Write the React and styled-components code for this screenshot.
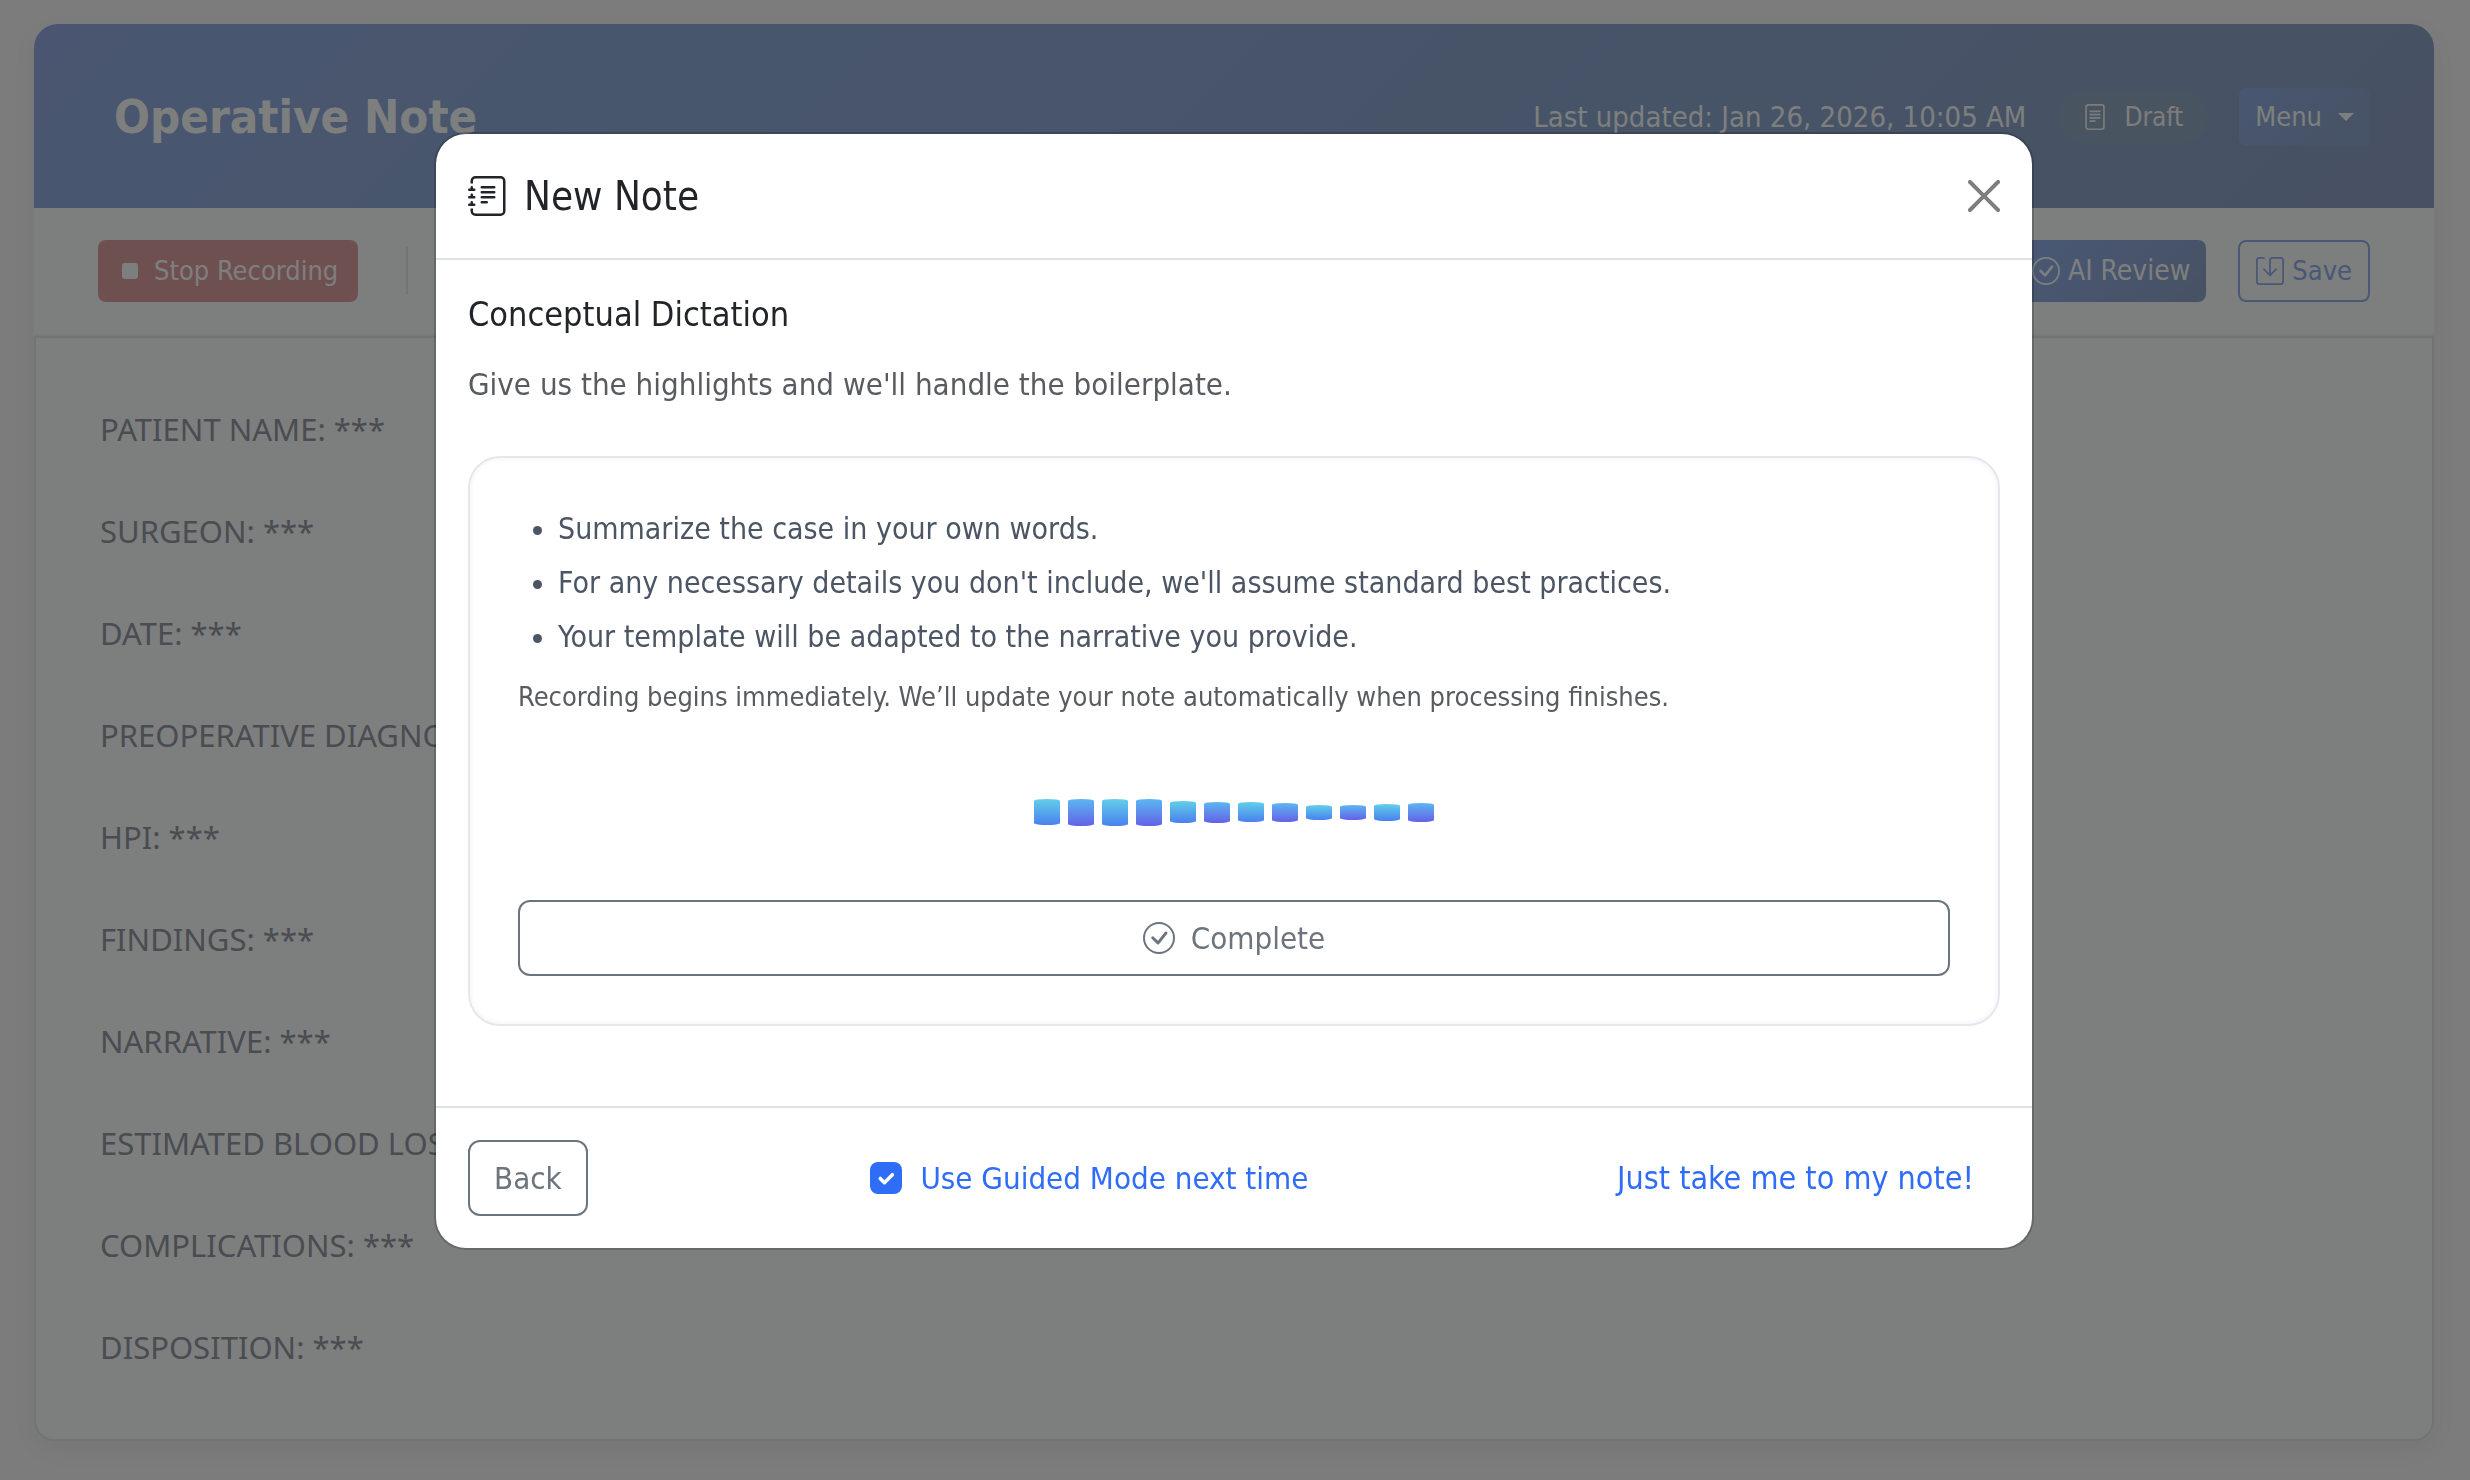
import React from 'react'
import styled, { createGlobalStyle } from 'styled-components'
import { BsCheckCircle, BsFileText, BsJournalText } from 'react-icons/bs'

const GlobalStyle = createGlobalStyle`
  *, *::before, *::after {
    box-sizing: border-box;
  }
  body {
    margin: 0;
    background: #f8f8f8;
    color: #212529;
    font-family: Tahoma, 'DejaVu Sans Condensed', 'Noto Sans', sans-serif;
    font-size: 31px;
    line-height: 48px;
  }
  button, input {
    font: inherit;
  }
  h1, h2, h3, p, ul {
    margin: 0;
    font-weight: 400;
  }
`

const Page = styled.div`
  padding: 24px 36px 40px 34px;
`

const NoteCard = styled.main`
  border-radius: 24px 24px 20px 20px;
  background: #fafefc;
  box-shadow: 0 8px 24px rgba(0, 0, 0, 0.05);
`

const NoteHeader = styled.header`
  display: flex;
  align-items: center;
  justify-content: space-between;
  min-height: 184px;
  padding: 2px 64px 0 80px;
  border-radius: 24px 24px 0 0;
  background: linear-gradient(135deg, #94ace2 0%, #90acd8 30%, #8ea2c6 100%);
  color: #fafefc;
`

const NoteTitle = styled.h1`
  font-size: 47px;
  font-weight: 700;
  line-height: 58px;
`

const HeaderMeta = styled.div`
  display: flex;
  align-items: center;
  gap: 32px;
  font-size: 29px;
`

const StatusBadge = styled.span`
  display: flex;
  align-items: center;
  gap: 16px;
  height: 54px;
  padding: 0 24px;
  border-radius: 27px;
  background: #92a8c2;
  color: #fbf8f8;
  font-size: 26px;
`

const MenuButton = styled.button`
  display: flex;
  align-items: center;
  gap: 16px;
  height: 58px;
  padding: 0 16px;
  border: none;
  border-radius: 8px;
  background: linear-gradient(135deg, #92aee4 0%, #8fa6cc 80%);
  color: #fafefc;
  font-size: 27px;

  &::after {
    content: '';
    border: 8px solid transparent;
    border-top-color: currentColor;
    border-bottom: 0;
  }
`

const Toolbar = styled.div`
  display: flex;
  align-items: center;
  justify-content: space-between;
  padding: 32px 64px;
  border-bottom: 2px solid #f1f5f3;
`

const ToolGroup = styled.div`
  display: flex;
  align-items: center;
  gap: 32px;
`

const ToolButton = styled.button`
  display: flex;
  align-items: center;
  gap: 8px;
  height: 62px;
  padding: 0 16px;
  border: 2px solid transparent;
  border-radius: 8px;
  font-size: 27px;
`

const StopButton = styled(ToolButton)`
  gap: 16px;
  padding: 0 18px 0 22px;
  background: #dea0a0;
  color: #fafefc;

  &::before {
    content: '';
    width: 16px;
    height: 16px;
    border-radius: 3px;
    background: currentColor;
  }
`

const ReviewButton = styled(ToolButton)`
  padding: 0 14px;
  background: linear-gradient(135deg, #92b0ec, #8ea4c6) border-box;
  color: #fafefc;
  font-size: 28px;
`

const SaveButton = styled(ToolButton)`
  border-color: #92b0ec;
  background: transparent;
  color: #92b0ec;
`

const Divider = styled.span`
  width: 2px;
  height: 48px;
  margin-left: 16px;
  background: #e8ebe9;
`

const NoteBody = styled.section`
  display: flex;
  flex-direction: column;
  gap: 48px;
  padding: 64px 64px 65px;
  border: 2px solid #e4e8e6;
  border-radius: 0 0 20px 20px;
  color: #9498a4;
  font-family: Tahoma, 'Noto Sans', sans-serif;
  font-size: 31px;
  line-height: 54px;
`

const Backdrop = styled.div`
  position: fixed;
  inset: 0;
  display: flex;
  align-items: flex-start;
  justify-content: center;
  padding: 132px 34px 32px 32px;
  background: rgba(0, 0, 0, 0.5);
`

const Modal = styled.div`
  width: 100%;
  max-width: 1600px;
  border: 2px solid rgba(0, 0, 0, 0.175);
  border-radius: 32px;
  background: #fff padding-box;
`

const ModalHeader = styled.div`
  display: flex;
  align-items: center;
  justify-content: space-between;
  padding: 32px;
  border-bottom: 2px solid #dee2e6;
`

const ModalTitle = styled.h2`
  display: flex;
  align-items: center;
  gap: 16px;
  font-size: 40px;
  line-height: 60px;
`

const CloseButton = styled.button`
  display: flex;
  padding: 0;
  border: none;
  background: none;
  color: #000;
  opacity: 0.5;
`

const ModalBody = styled.div`
  padding: 32px 32px 80px;
`

const Heading = styled.h3`
  margin-bottom: 24px;
  font-size: 34px;
  line-height: 44px;
`

const Lead = styled.p`
  margin-bottom: 48px;
  color: #585b5f;
`

const Panel = styled.div`
  padding: 48px;
  border: 2px solid #e5e7eb;
  border-radius: 32px;
  box-shadow: inset 0 0 4px 1px #f3f3fb;
`

const Tips = styled.ul`
  padding-left: 40px;
  color: #4b5563;
  font-size: 30px;
  line-height: 46px;

  li {
    margin-bottom: 8px;
  }
`

const Hint = styled.p`
  padding-top: 8px;
  color: #585b5f;
  font-size: 27px;
  line-height: 42px;
`

const Wave = styled.div`
  display: flex;
  align-items: center;
  justify-content: center;
  gap: 8px;
  height: 112px;
  margin: 38px 0 32px;
`

const WaveBar = styled.span`
  width: 26px;
  border-radius: 13px / 2px;
  background: linear-gradient(#62cfe9, #4a80ee);

  &:nth-child(even) {
    background: linear-gradient(#5cb6f2, #6462e6);
  }
`

const OutlineButton = styled.button`
  display: flex;
  align-items: center;
  justify-content: center;
  gap: 16px;
  width: ${(props) => (props.$block ? '100%' : 'auto')};
  height: 76px;
  padding: 0 24px;
  border: 2px solid #6c757d;
  border-radius: 12px;
  background: #fff;
  color: #6c757d;
`

const ModalFooter = styled.div`
  display: flex;
  align-items: center;
  justify-content: space-between;
  padding: 32px;
  border-top: 2px solid #dee2e6;
`

const CheckLabel = styled.label`
  display: flex;
  align-items: center;
  gap: 18px;
  color: #2f6df6;
`

const CheckBox = styled.span`
  display: grid;

  input,
  svg {
    grid-area: 1 / 1;
    width: 32px;
    height: 32px;
    margin: 0;
  }
  input {
    appearance: none;
    border-radius: 8px;
    background: #2f6df6;
  }
  svg {
    pointer-events: none;
  }
`

const SkipLink = styled.a`
  padding: 0 26px;
  color: #2f6df6;
  font-size: 32px;
  text-decoration: none;
`

const sections = [
  'PATIENT NAME',
  'SURGEON',
  'DATE',
  'PREOPERATIVE DIAGNOSIS',
  'HPI',
  'FINDINGS',
  'NARRATIVE',
  'ESTIMATED BLOOD LOSS',
  'COMPLICATIONS',
  'DISPOSITION',
]

const tips = [
  'Summarize the case in your own words.',
  "For any necessary details you don't include, we'll assume standard best practices.",
  'Your template will be adapted to the narrative you provide.',
]

const levels = [26, 27, 27, 27, 22, 21, 20, 19, 15, 15, 17, 19]

const CloseIcon = () => (
  <svg width="32" height="32" viewBox="0 0 16 16" fill="currentColor">
    <path d="M.293.293a1 1 0 0 1 1.414 0L8 6.586 14.293.293a1 1 0 1 1 1.414 1.414L9.414 8l6.293 6.293a1 1 0 0 1-1.414 1.414L8 9.414l-6.293 6.293a1 1 0 0 1-1.414-1.414L6.586 8 .293 1.707a1 1 0 0 1 0-1.414z" />
  </svg>
)

const SaveIcon = () => (
  <svg width="28" height="28" viewBox="0 0 16 16" fill="currentColor">
    <path d="M2 1a1 1 0 0 0-1 1v12a1 1 0 0 0 1 1h12a1 1 0 0 0 1-1V2a1 1 0 0 0-1-1H9.5a1 1 0 0 0-1 1v7.293l2.646-2.647a.5.5 0 0 1 .708.708l-3.5 3.5a.5.5 0 0 1-.708 0l-3.5-3.5a.5.5 0 1 1 .708-.708L7.5 9.293V2a2 2 0 0 1 2-2H14a2 2 0 0 1 2 2v12a2 2 0 0 1-2 2H2a2 2 0 0 1-2-2V2a2 2 0 0 1 2-2h2.5a.5.5 0 0 1 0 1z" />
  </svg>
)

const Note = () => (
  <NoteCard>
    <NoteHeader>
      <NoteTitle>Operative Note</NoteTitle>
      <HeaderMeta>
        <span>Last updated: Jan 26, 2026, 10:05 AM</span>
        <StatusBadge>
          <BsFileText size={26} />
          Draft
        </StatusBadge>
        <MenuButton type="button">Menu</MenuButton>
      </HeaderMeta>
    </NoteHeader>
    <Toolbar>
      <ToolGroup>
        <StopButton type="button">Stop Recording</StopButton>
        <Divider />
      </ToolGroup>
      <ToolGroup>
        <ReviewButton type="button">
          <BsCheckCircle size={28} />
          AI Review
        </ReviewButton>
        <SaveButton type="button">
          <SaveIcon />
          Save
        </SaveButton>
      </ToolGroup>
    </Toolbar>
    <NoteBody>
      {sections.map((name) => (
        <p key={name}>{name}: ***</p>
      ))}
    </NoteBody>
  </NoteCard>
)

const NewNoteModal = () => (
  <Backdrop>
    <Modal role="dialog" aria-modal="true" aria-labelledby="new-note-title">
      <ModalHeader>
        <ModalTitle id="new-note-title">
          <BsJournalText size={40} />
          New Note
        </ModalTitle>
        <CloseButton type="button" aria-label="Close">
          <CloseIcon />
        </CloseButton>
      </ModalHeader>
      <ModalBody>
        <Heading>Conceptual Dictation</Heading>
        <Lead>Give us the highlights and we'll handle the boilerplate.</Lead>
        <Panel>
          <Tips>
            {tips.map((tip) => (
              <li key={tip}>{tip}</li>
            ))}
          </Tips>
          <Hint>
            Recording begins immediately. We’ll update your note automatically
            when processing finishes.
          </Hint>
          <Wave>
            {levels.map((level, i) => (
              <WaveBar key={i} style={{ height: level }} />
            ))}
          </Wave>
          <OutlineButton type="button" $block>
            <BsCheckCircle size={32} />
            Complete
          </OutlineButton>
        </Panel>
      </ModalBody>
      <ModalFooter>
        <OutlineButton type="button">Back</OutlineButton>
        <CheckLabel htmlFor="guided-mode">
          <CheckBox>
            <input id="guided-mode" type="checkbox" defaultChecked />
            <svg viewBox="0 0 20 20" fill="none" stroke="#fff">
              <path
                d="m6.4 10.3 2.6 2.6 5-5"
                strokeWidth="2.2"
                strokeLinecap="round"
                strokeLinejoin="round"
              />
            </svg>
          </CheckBox>
          Use Guided Mode next time
        </CheckLabel>
        <SkipLink href="#note">Just take me to my note!</SkipLink>
      </ModalFooter>
    </Modal>
  </Backdrop>
)

export default () => (
  <>
    <GlobalStyle />
    <Page>
      <Note />
    </Page>
    <NewNoteModal />
  </>
)
